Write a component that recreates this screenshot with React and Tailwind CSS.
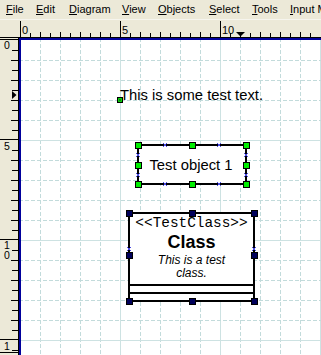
import React from "react";

const MENU = [
  { u: "F", rest: "ile", w: "w-[30px]" },
  { u: "E", rest: "dit", w: "w-[33px]" },
  { u: "D", rest: "iagram", w: "w-[53px]" },
  { u: "V", rest: "iew", w: "w-[36px]" },
  { u: "O", rest: "bjects", w: "w-[51px]" },
  { u: "S", rest: "elect", w: "w-[43px]" },
  { u: "T", rest: "ools", w: "w-[38px]" },
  { u: "I", rest: "nput Methods", w: "w-[90px]" },
];

const range = (a, b, s) => {
  const out = [];
  for (let v = a; v <= b; v += s) out.push(v);
  return out;
};

function TopRuler() {
  return (
    <svg width="302" height="18" viewBox="19 20 302 18" className="block">
      <rect x="19" y="37" width="302" height="1" fill="#000" />
      {[20, 120, 220].map((x) => (
        <rect key={x} x={x} y="21" width="1" height="16" fill="#000" />
      ))}
      {range(30, 320, 10)
        .filter((x) => (x - 20) % 100 !== 0)
        .map((x) => (
          <rect key={x} x={x} y={(x - 20) % 20 === 0 ? 32 : 33} width="1" height={(x - 20) % 20 === 0 ? 5 : 4} fill="#000" />
        ))}
      <g fontFamily="'Liberation Sans', sans-serif" fontSize="11" fill="#000">
        <text x="22" y="34">0</text>
        <text x="122" y="34">5</text>
        <text x="222" y="34">10</text>
      </g>
      <polygon points="236,32 245,32 240.5,36.5" fill="#000" />
    </svg>
  );
}

function LeftRuler() {
  return (
    <svg width="19" height="317" viewBox="0 38 19 317" className="block">
      <rect x="18" y="38" width="1" height="317" fill="#000" />
      {[40, 140, 240, 340].map((y) => (
        <rect key={y} x="0" y={y - 1} width="18" height="1" fill="#000" />
      ))}
      {range(50, 350, 10)
        .filter((y) => (y - 40) % 100 !== 0)
        .map((y) => (
          <rect key={y} x={(y - 40) % 20 === 0 ? 11 : 12} y={y} width={(y - 40) % 20 === 0 ? 7 : 6} height="1" fill="#000" />
        ))}
      <g fontFamily="'Liberation Sans', sans-serif" fontSize="10.5" fill="#000">
        <text x="4" y="49">0</text>
        <text x="4" y="150">5</text>
        <text x="4" y="249">1</text>
        <text x="4" y="259">0</text>
        <text x="4" y="350">1</text>
      </g>
      <polygon points="12,91 12,99 16.5,95" fill="#000" />
      <rect x="0" y="352" width="18" height="1" fill="#000" />
    </svg>
  );
}

function Handle({ cx, cy, fill }) {
  return <rect x={cx - 2.5} y={cy - 2.5} width="6" height="6" fill={fill} stroke="#000" strokeWidth="1" />;
}

function Cross({ x, y }) {
  return (
    <g stroke="#4a4ae6" strokeWidth="1">
      <line x1={x - 2} y1={y - 2} x2={x + 2} y2={y + 2} />
      <line x1={x - 2} y1={y + 2} x2={x + 2} y2={y - 2} />
    </g>
  );
}

function Canvas() {
  const green = "#00ee00";
  const navy = "#00005a";
  return (
    <div className="relative flex-1 bg-white overflow-hidden">
      <svg width="302" height="317" viewBox="19 38 302 317" className="block">
        {range(40, 320, 20).map((x) =>
          (x - 20) % 100 === 0 ? (
            <line key={"v" + x} x1={x + 0.5} y1="38" x2={x + 0.5} y2="355" stroke="#cde2e2" />
          ) : (
            <line key={"v" + x} x1={x + 0.5} y1="38" x2={x + 0.5} y2="355" stroke="#c2dbdb" strokeDasharray="4 2" />
          )
        )}
        {range(60, 340, 20).map((y) =>
          (y - 40) % 100 === 0 ? (
            <line key={"h" + y} x1="19" y1={y + 0.5} x2="321" y2={y + 0.5} stroke="#cde2e2" />
          ) : (
            <line key={"h" + y} x1="19" y1={y + 0.5} x2="321" y2={y + 0.5} stroke="#c2dbdb" strokeDasharray="4 2" />
          )
        )}
        <rect x="19" y="38" width="302" height="2" fill="#00009c" />
        <rect x="19" y="38" width="2" height="317" fill="#00009c" />

        {/* text object handle */}
        <rect x="117.5" y="97.5" width="5" height="5" fill={green} stroke="#000" />
        <g stroke="#205020" strokeWidth="0.8">
          <line x1="118.5" y1="98.5" x2="121.5" y2="101.5" />
          <line x1="118.5" y1="101.5" x2="121.5" y2="98.5" />
        </g>

        {/* Test object 1 */}
        <rect x="138" y="145" width="108" height="39" fill="#fff" stroke="#000" strokeWidth="2" />
        {[165, 219].map((x) => (
          <g key={x}>
            <Cross x={x} y={145} />
            <Cross x={x} y={184} />
          </g>
        ))}
        {[155, 175].map((y) => (
          <g key={y}>
            <Cross x={138} y={y} />
            <Cross x={246} y={y} />
          </g>
        ))}
        {[138, 192, 246].map((x) =>
          [145, 165, 184]
            .filter((y) => !(x === 192 && y === 165))
            .map((y) => <Handle key={x + "-" + y} cx={x} cy={y} fill={green} />)
        )}

        {/* class */}
        <rect x="129" y="213" width="125" height="88" fill="#fff" stroke="#000" strokeWidth="2" />
        <line x1="129" y1="285" x2="254" y2="285" stroke="#000" strokeWidth="2" />
        <line x1="129" y1="293" x2="254" y2="293" stroke="#000" strokeWidth="2" />
        <Cross x={129} y={249} />
        <Cross x={254} y={249} />
        {[129, 192, 254].map((x) =>
          [213, 255, 301]
            .filter((y) => !(x === 192 && y === 255))
            .map((y) => <Handle key={"c" + x + "-" + y} cx={x} cy={y} fill={navy} />)
        )}
      </svg>

      <div className="absolute left-[101px] top-[50px] whitespace-nowrap text-[14.8px] leading-[15px] text-black font-['Liberation_Sans',sans-serif]">
        This is some test text.
      </div>

      <div className="absolute left-[118px] top-[107px] w-[108px] h-[39px] pt-[2px] flex items-center justify-center text-[14.8px] leading-[15px] text-black font-['Liberation_Sans',sans-serif]">
        Test object 1
      </div>

      <div className="absolute left-[110px] top-[175px] w-[125px] pt-[3px] flex flex-col items-center text-black">
        <div className="text-[14.4px] leading-[15px] font-['Liberation_Mono',monospace]">&lt;&lt;TestClass&gt;&gt;</div>
        <div className="text-[18px] leading-[23px] font-bold font-['Liberation_Sans',sans-serif]">Class</div>
        <div className="text-[12px] leading-[13px] italic text-center font-['Liberation_Sans',sans-serif]">
          This is a test
          <br />
          class.
        </div>
      </div>
    </div>
  );
}

export default function App() {
  return (
    <div className="w-[321px] h-[355px] overflow-hidden bg-[#ece9d8] flex flex-col">
      {/* Menu bar */}
      <div className="h-[20px] flex shrink-0 pl-[6px] border-b border-[#f6f5ee] text-[11px] leading-[19px] text-black font-['Liberation_Sans',sans-serif] whitespace-nowrap">
        {MENU.map((m) => (
          <div key={m.u + m.rest} className={`${m.w} shrink-0`}>
            <span className="underline">{m.u}</span>
            {m.rest}
          </div>
        ))}
      </div>

      {/* Top ruler */}
      <div className="h-[18px] flex shrink-0">
        <div className="w-[19px] shrink-0 border-b border-black" />
        <TopRuler />
      </div>

      <div className="flex flex-1 min-h-0">
        <div className="w-[19px] shrink-0">
          <LeftRuler />
        </div>
        <Canvas />
      </div>
    </div>
  );
}
